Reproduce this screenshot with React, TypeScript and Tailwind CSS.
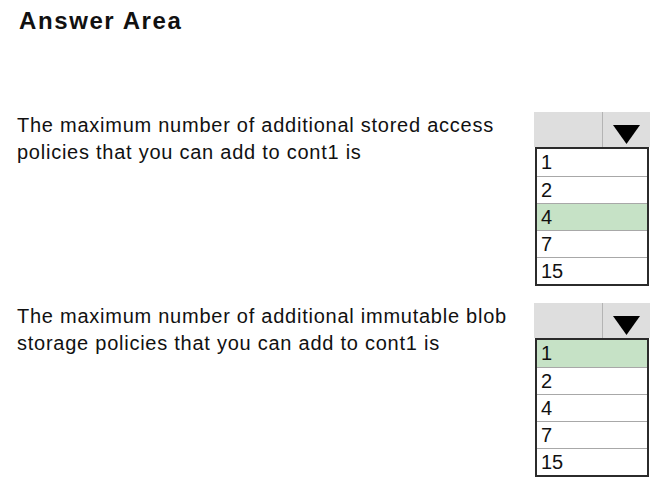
const options = ["1", "2", "4", "7", "15"];

function Dropdown({ selected }: { selected: string }) {
  return (
    <div className="w-[116px]">
      <div className="flex h-[35px] bg-[#dedede]">
        <div className="w-[68px]" />
        <div className="w-px bg-[#b4b4b4]" />
        <div className="flex flex-1 justify-center pt-[13px]">
          <svg width="27" height="19" viewBox="0 0 27 19">
            <polygon points="0,0 27,0 13.5,19" fill="#000" />
          </svg>
        </div>
      </div>
      <div className="ml-px w-[114px] border-2 border-[#2b2b2b] bg-white">
        {options.map((o, i) => (
          <div
            key={o}
            className={`h-[27px] pl-[4px] text-[20px] leading-[26px] text-[#111] ${i > 0 ? "border-t border-[#a8a8a8]" : ""} ${o === selected ? "bg-[#c6e2c6]" : ""}`}
          >
            {o}
          </div>
        ))}
      </div>
    </div>
  );
}

function Question({ lines, selected }: { lines: string[]; selected: string }) {
  return (
    <div className="flex items-start justify-between pr-[9px]">
      <p className="pt-[1px] text-[20px] leading-[27px] tracking-[0.75px] text-[#111]">
        {lines[0]}
        <br />
        {lines[1]}
      </p>
      <div className="pt-[1px]">
        <Dropdown selected={selected} />
      </div>
    </div>
  );
}

export default function App() {
  return (
    <div className="h-[483px] w-[659px] bg-white pl-[17px] font-['Liberation_Sans',Arial,sans-serif]">
      <h1 className="pl-[2px] pt-[7px] text-[24px] font-bold leading-[28px] tracking-[1.6px] text-[#111]">
        Answer Area
      </h1>
      <div className="mt-[76px] flex flex-col gap-[16px]">
        <Question
          lines={["The maximum number of additional stored access", "policies that you can add to cont1 is"]}
          selected="4"
        />
        <Question
          lines={["The maximum number of additional immutable blob", "storage policies that you can add to cont1 is"]}
          selected="1"
        />
      </div>
    </div>
  );
}
